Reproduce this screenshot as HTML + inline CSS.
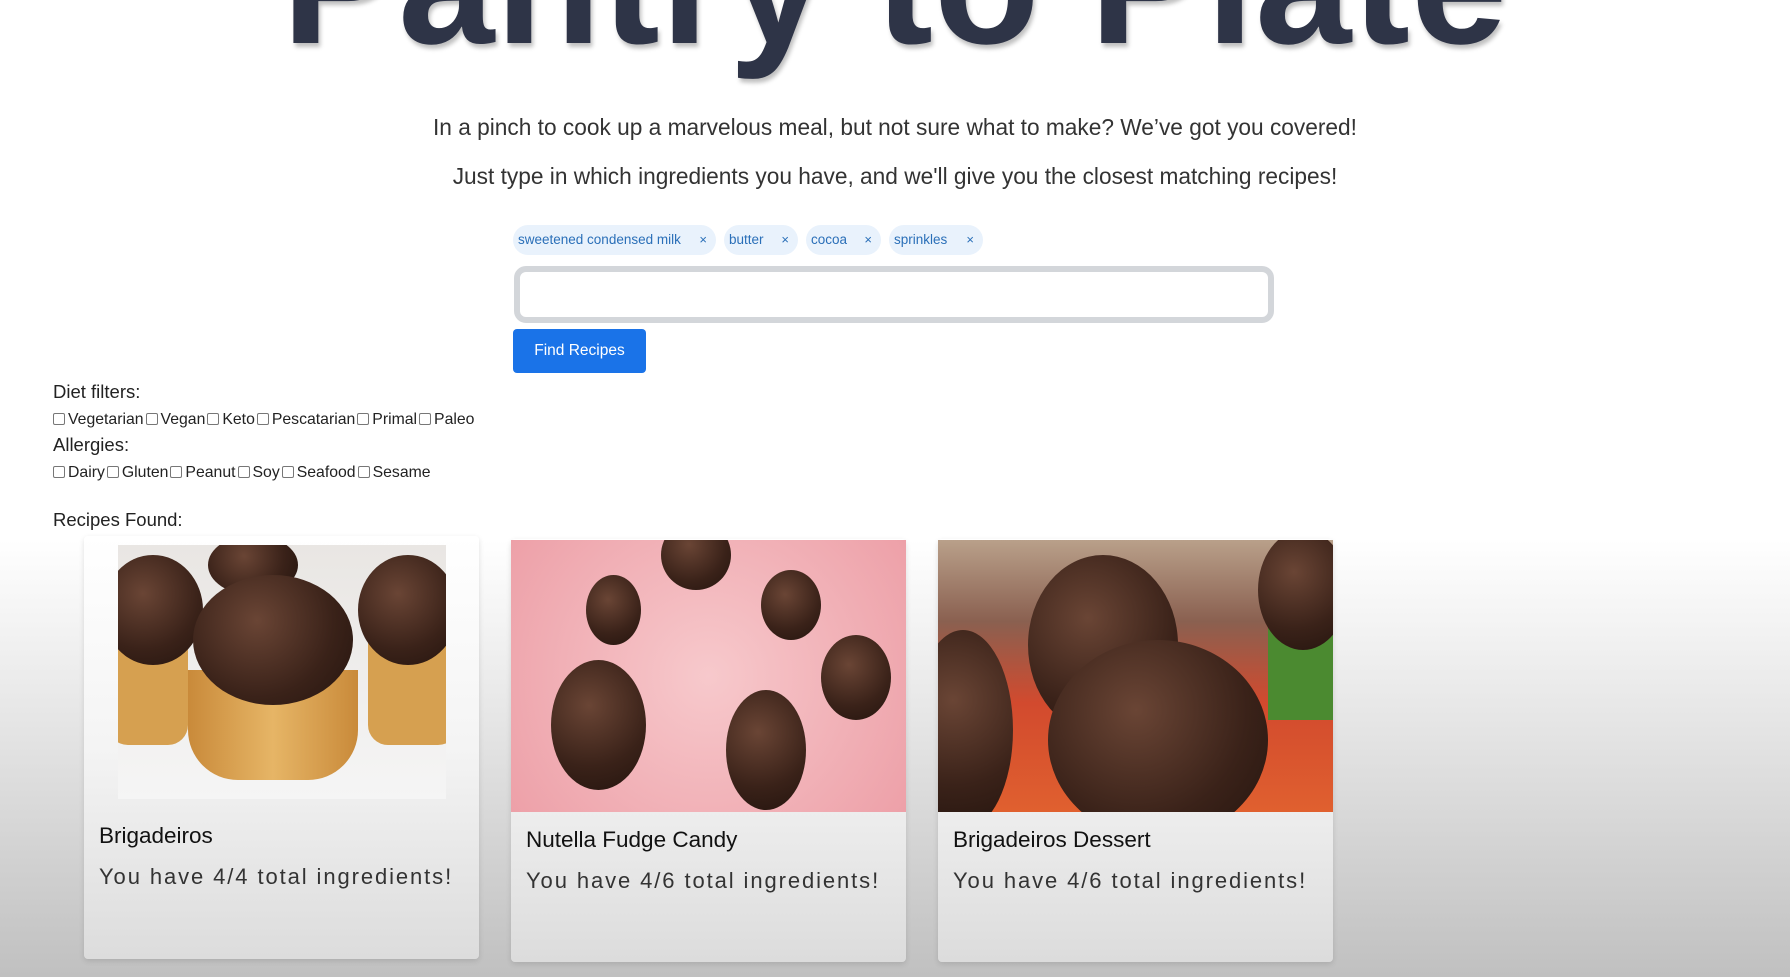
<!DOCTYPE html>
<html><head><meta charset="utf-8"><style>
*{margin:0;padding:0;box-sizing:border-box}
body{width:1790px;height:977px;overflow:hidden;position:relative;font-family:"Liberation Sans",sans-serif;background:linear-gradient(180deg,#fff 0,#fff 540px,#e0e0e0 760px,#c0c0c0 977px);}
.a{position:absolute;white-space:nowrap}
h1{position:absolute;left:0;width:1790px;text-align:center;top:-103px;font-size:173px;font-weight:bold;color:#2e3447;line-height:173px;letter-spacing:1px;text-shadow:2px 4px 4px rgba(0,0,0,.25)}
.sub{left:0;width:1790px;text-align:center;font-size:22.7px;color:#333}
.chip{position:absolute;top:225px;height:30px;border-radius:15px;background:#e9f2fc;color:#2a6fb8;font-size:13.5px;line-height:30px;padding-left:5px}
.chip b{position:absolute;right:9px;font-weight:normal;color:#2a6fb8;font-size:13px}
.inp{position:absolute;left:514px;top:266px;width:760px;height:57px;border:6px solid #d3d6da;border-radius:12px;background:#fff}
.btn{position:absolute;left:513px;top:329px;width:133px;height:44px;background:#1a73e8;border-radius:4px;color:#fff;font-size:15.5px;line-height:44px;text-align:center}
.lbl{font-size:18.5px;color:#222;left:53px}
.row{font-size:15.8px;color:#222;left:53px}
.cb{display:inline-block;width:12px;height:12px;border:1px solid #777;border-radius:2px;vertical-align:-1px;margin-right:3px;margin-left:2px;background:#fff}
.card{position:absolute;width:395px;height:423px;background:linear-gradient(180deg,#fff 0,#f4f4f4 50%,#dcdcdc 100%);border-radius:4px;box-shadow:0 2px 6px rgba(0,0,0,.12)}
.img{position:absolute;overflow:hidden}
.t{position:absolute;font-size:22.5px;color:#111}
.s{position:absolute;font-size:22px;color:#333;letter-spacing:1.9px}
.ball{position:absolute;border-radius:50%;background:radial-gradient(circle at 40% 35%,#6a4535,#3a2219 60%,#24140e)}
</style></head><body>
<h1>Pantry to Plate</h1>
<div class="a sub" style="top:114px">In a pinch to cook up a marvelous meal, but not sure what to make? We’ve got you covered!</div>
<div class="a sub" style="top:163px">Just type in which ingredients you have, and we'll give you the closest matching recipes!</div>
<div class="chip" style="left:513px;width:203px">sweetened condensed milk<b>×</b></div>
<div class="chip" style="left:724px;width:74px">butter<b>×</b></div>
<div class="chip" style="left:806px;width:75px">cocoa<b>×</b></div>
<div class="chip" style="left:889px;width:94px">sprinkles<b>×</b></div>
<div class="inp"></div>
<div class="btn">Find Recipes</div>
<div class="a lbl" style="top:381px">Diet filters:</div>
<div class="a row" style="top:411px;left:51px"><span class="cb"></span>Vegetarian<span class="cb"></span>Vegan<span class="cb"></span>Keto<span class="cb"></span>Pescatarian<span class="cb"></span>Primal<span class="cb"></span>Paleo</div>
<div class="a lbl" style="top:434px">Allergies:</div>
<div class="a row" style="top:464px;left:51px"><span class="cb"></span>Dairy<span class="cb"></span>Gluten<span class="cb"></span>Peanut<span class="cb"></span>Soy<span class="cb"></span>Seafood<span class="cb"></span>Sesame</div>
<div class="a lbl" style="top:509px">Recipes Found:</div>

<div class="card" style="left:84px;top:536px">
 <div class="img" style="left:34px;top:9px;width:328px;height:254px;background:linear-gradient(180deg,#e9e6e3,#f5f5f5)">
  <div style="position:absolute;left:-10px;top:90px;width:80px;height:110px;background:#d6a050;border-radius:0 0 20px 20px"></div>
  <div style="position:absolute;left:250px;top:90px;width:90px;height:110px;background:#d6a050;border-radius:0 0 20px 20px"></div>
  <div class="ball" style="left:-15px;top:10px;width:100px;height:110px"></div>
  <div class="ball" style="left:90px;top:-10px;width:90px;height:60px"></div>
  <div class="ball" style="left:240px;top:10px;width:100px;height:110px"></div>
  <div style="position:absolute;left:70px;top:125px;width:170px;height:110px;background:linear-gradient(90deg,#c98a3a,#e6b566,#c98a3a);border-radius:0 0 50px 50px"></div>
  <div class="ball" style="left:75px;top:30px;width:160px;height:130px"></div>
 </div>
 <div class="t" style="left:15px;top:287px">Brigadeiros</div>
 <div class="s" style="left:15px;top:328px">You have 4/4 total ingredients!</div>
</div>

<div class="card" style="left:511px;top:539px">
 <div class="img" style="left:0;top:1px;width:395px;height:272px;background:radial-gradient(circle at 50% 50%,#f7c9cc,#eda0a8)">
  <div class="ball" style="left:150px;top:-20px;width:70px;height:70px"></div>
  <div class="ball" style="left:250px;top:30px;width:60px;height:70px"></div>
  <div class="ball" style="left:75px;top:35px;width:55px;height:70px"></div>
  <div class="ball" style="left:310px;top:95px;width:70px;height:85px"></div>
  <div class="ball" style="left:40px;top:120px;width:95px;height:130px"></div>
  <div class="ball" style="left:215px;top:150px;width:80px;height:120px"></div>
 </div>
 <div class="t" style="left:15px;top:288px">Nutella Fudge Candy</div>
 <div class="s" style="left:15px;top:329px">You have 4/6 total ingredients!</div>
</div>

<div class="card" style="left:938px;top:539px">
 <div class="img" style="left:0;top:1px;width:395px;height:272px;background:linear-gradient(180deg,#b9a08a 0,#8a6050 30%,#d24a2e 60%,#e0602f 100%)">
  <div style="position:absolute;left:330px;top:60px;width:70px;height:120px;background:#4b8a30"></div>
  <div class="ball" style="left:320px;top:-10px;width:90px;height:120px"></div>
  <div class="ball" style="left:-25px;top:90px;width:100px;height:200px"></div>
  <div class="ball" style="left:90px;top:15px;width:150px;height:180px"></div>
  <div class="ball" style="left:110px;top:100px;width:220px;height:200px"></div>
 </div>
 <div class="t" style="left:15px;top:288px">Brigadeiros Dessert</div>
 <div class="s" style="left:15px;top:329px">You have 4/6 total ingredients!</div>
</div>
</body></html>
